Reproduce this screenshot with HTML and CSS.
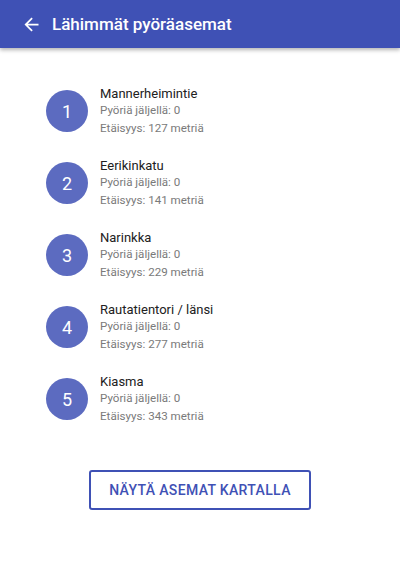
FILE: index.html
```html
<!DOCTYPE html>
<html lang="fi">
<head>
<meta charset="utf-8">
<link rel="stylesheet" href="styles.css">
</head>
<body>
<header class="appbar">
  <svg class="back" width="21" height="21" viewBox="0 0 24 24"><path d="M20 11H7.830l5.59-5.59L12 4l-8 8 8 8 1.41-1.41L7.83 13H20v-2z" fill="#fff"/></svg>
  <h1 class="title">Lähimmät pyöräasemat</h1>
</header>
<main class="content">
  <ul class="list">
    <li class="item"><div class="badge">1</div><div class="info"><div class="name">Mannerheimintie</div><div class="sub">Pyöriä jäljellä: 0</div><div class="sub">Etäisyys: 127 metriä</div></div></li>
    <li class="item"><div class="badge">2</div><div class="info"><div class="name">Eerikinkatu</div><div class="sub">Pyöriä jäljellä: 0</div><div class="sub">Etäisyys: 141 metriä</div></div></li>
    <li class="item"><div class="badge">3</div><div class="info"><div class="name">Narinkka</div><div class="sub">Pyöriä jäljellä: 0</div><div class="sub">Etäisyys: 229 metriä</div></div></li>
    <li class="item"><div class="badge">4</div><div class="info"><div class="name">Rautatientori / länsi</div><div class="sub">Pyöriä jäljellä: 0</div><div class="sub">Etäisyys: 277 metriä</div></div></li>
    <li class="item"><div class="badge">5</div><div class="info"><div class="name">Kiasma</div><div class="sub">Pyöriä jäljellä: 0</div><div class="sub">Etäisyys: 343 metriä</div></div></li>
  </ul>
  <div class="actions"><button class="btn">NÄYTÄ ASEMAT KARTALLA</button></div>
</main>
</body>
</html>
```
FILE: styles.css
```css
* { box-sizing: border-box; }
html, body { margin: 0; padding: 0; background: #fff; font-family: Roboto, "Noto Sans", sans-serif; }
.appbar {
  height: 48px;
  background: #3f51b5;
  display: flex;
  align-items: center;
  padding-left: 21px;
  box-shadow: 0 2px 4px rgba(0,0,0,0.3);
}
.back { display: block; }
.title { margin: 0 0 0 10px; color: #fff; font-size: 17px; font-weight: 500; line-height: 20px; }
.content { padding-top: 36px; }
.list { list-style: none; margin: 0; padding: 0 0 0 46px; display: flex; flex-direction: column; gap: 18px; }
.item { display: flex; align-items: center; height: 54px; }
.badge {
  width: 42px; height: 42px; border-radius: 50%;
  background: #5c6bc0; color: #fff;
  display: flex; align-items: center; justify-content: center;
  font-size: 18px;
  flex: none;
}
.info { margin-left: 12px; }
.name { font-size: 13px; color: #212121; line-height: 17.5px; }
.sub { font-size: 11.6px; color: #7a7a7a; line-height: 17.5px; }
.actions { display: flex; justify-content: center; padding-top: 44px; }
.btn {
  width: 222px; height: 40px;
  background: #fff;
  border: 2px solid #3f51b5; border-radius: 3px;
  color: #3f51b5;
  font-family: Roboto, sans-serif; font-size: 14px; font-weight: 500;
  letter-spacing: 0.35px;
}
```
